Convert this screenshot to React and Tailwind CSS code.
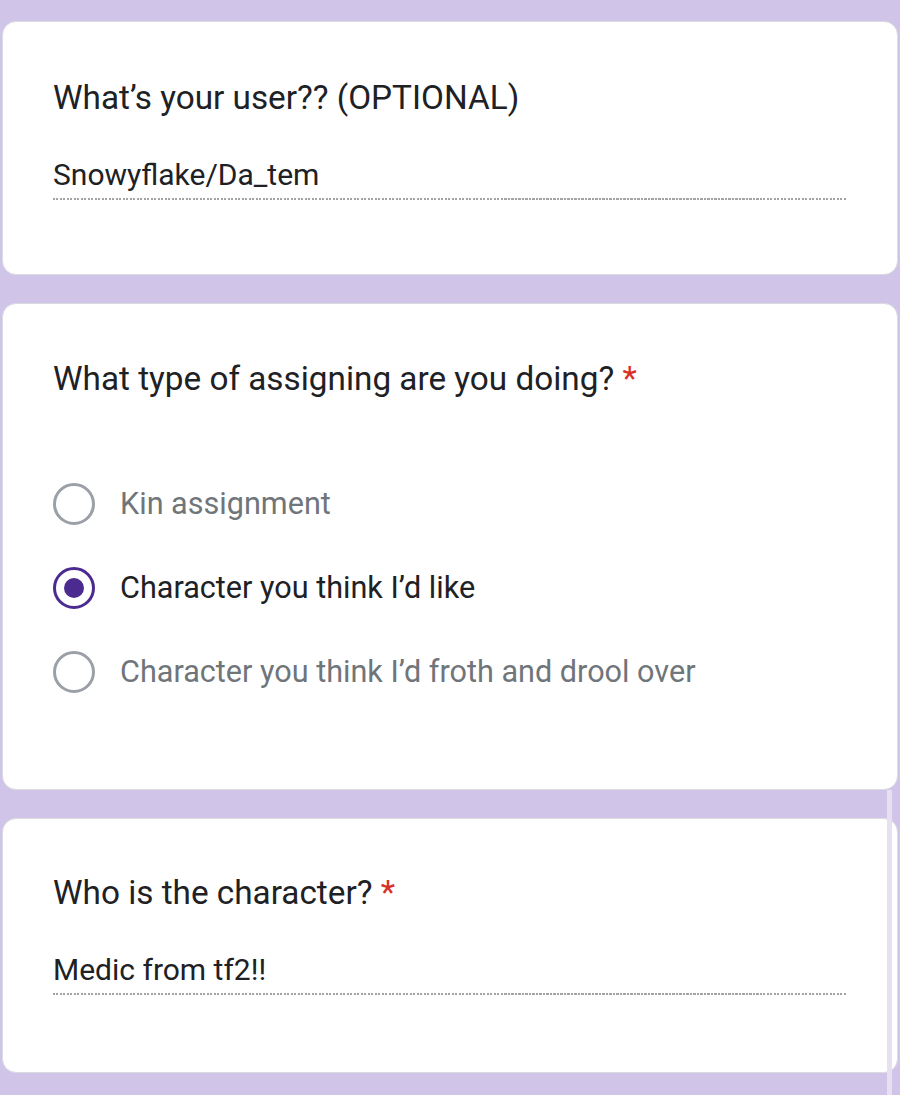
import React from 'react';

const font = { fontFamily: 'Roboto, "Noto Sans", sans-serif' };

function Dotted() {
  return (
    <div className="h-[2px] w-full bg-[repeating-linear-gradient(to_right,#a3a3a3_0_2px,transparent_2px_3.5px)]" />
  );
}

function Radio({ checked, label }) {
  return (
    <div className="flex items-center h-[84px]">
      <div
        className={
          'w-[42px] h-[42px] rounded-full border-[3px] flex items-center justify-center shrink-0 ' +
          (checked ? 'border-[#4b2b8f]' : 'border-[#9aa0a6]')
        }
      >
        {checked && <div className="w-[20px] h-[20px] rounded-full bg-[#4b2b8f]" />}
      </div>
      <span
        className={
          'ml-[25px] text-[30.6px] leading-[40px] ' + (checked ? 'text-[#202124]' : 'text-[#70757a]')
        }
      >
        {label}
      </span>
    </div>
  );
}

function TextQuestion({ title, required, answer, className }) {
  return (
    <div className={'bg-white rounded-[14px] border border-[#dadce0] px-[50px] ' + className}>
      <h2 className="text-[33.3px] leading-[40px] text-[#202124]">
        {title}
        {required && <span className="text-[#d93025]"> *</span>}
      </h2>
      <div className="mt-[37px]">
        <p className="text-[30px] leading-[40px] text-[#202124]">{answer}</p>
        <div className="mt-[3px]">
          <Dotted />
        </div>
      </div>
    </div>
  );
}

export default function App() {
  return (
    <div style={font} className="relative min-h-[1095px] bg-[#d1c4e9] pt-[21px] px-[2px] flex flex-col gap-[28px]">
      <TextQuestion title="What’s your user?? (OPTIONAL)" answer="Snowyflake/Da_tem" className="h-[254px] pt-[56px]" />

      <div className="bg-white rounded-[14px] border border-[#dadce0] px-[50px] pt-[55px] h-[487px]">
        <h2 className="text-[33.3px] leading-[40px] text-[#202124]">
          What type of assigning are you doing?<span className="text-[#d93025]"> *</span>
        </h2>
        <div className="mt-[63px]">
          <Radio label="Kin assignment" />
          <Radio checked label="Character you think I’d like" />
          <Radio label="Character you think I’d froth and drool over" />
        </div>
      </div>

      <TextQuestion title="Who is the character?" required answer="Medic from tf2!!" className="h-[255px] pt-[54px]" />

      {/* scrollbar */}
      <div className="absolute right-[8px] top-[790px] bottom-0 w-[5px] bg-[#e6e0f0]" />
    </div>
  );
}
